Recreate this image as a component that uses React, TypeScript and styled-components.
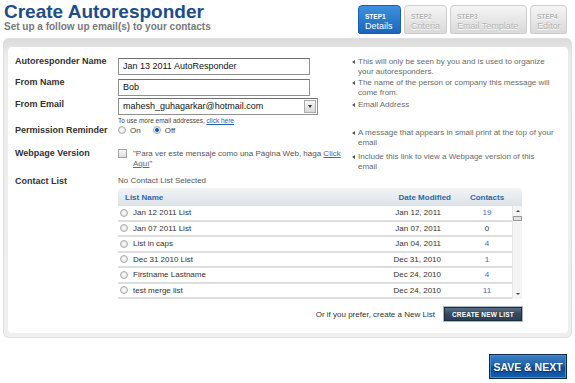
import React from 'react';
import styled, { createGlobalStyle, css } from 'styled-components';

const GlobalStyle = createGlobalStyle`
  body {
    margin: 0;
    background: #fff;
    font-family: "Liberation Sans", Arial, sans-serif;
  }
`;

const Page = styled.div`
  width: 575px;
`;

const Header = styled.div`
  display: flex;
  justify-content: space-between;
  height: 38px;
`;

const TitleBlock = styled.div`
  padding: 2px 0 0 4px;
`;

const Title = styled.h1`
  margin: 0;
  font-size: 19px;
  line-height: 19px;
  font-weight: bold;
  color: #1d4e87;
`;

const Subtitle = styled.div`
  font-size: 10px;
  line-height: 12px;
  font-weight: bold;
  color: #787878;
`;

const Tabs = styled.div`
  display: flex;
  gap: 3px;
  padding: 5px 8px 0 0;
  align-items: flex-start;
`;

const Tab = styled.div<{ $active?: boolean; $w: number }>`
  box-sizing: border-box;
  width: ${(p) => p.$w}px;
  height: 29px;
  padding: 7px 0 0 6px;
  border-radius: 4px 4px 2px 2px;
  white-space: nowrap;
  overflow: hidden;
  ${(p) =>
    p.$active
      ? css`
          background: linear-gradient(#3d91de, #1b66bb);
          border: 1px solid #1a5fae;
          color: #fff;
        `
      : css`
          background: linear-gradient(#f5f5f5, #d9d9d9);
          border: 1px solid #cdcdcd;
          color: #b3b3b3;
          text-shadow: 0 1px 0 #fff;
        `}
`;

const StepNo = styled.div`
  font-size: 6.5px;
  line-height: 8px;
  font-weight: bold;
`;

const StepName = styled.div`
  font-size: 9px;
  line-height: 11px;
`;

const Panel = styled.div`
  margin: 0 3px;
  border-radius: 6px;
  background: linear-gradient(#dadada, #ececec 18px, #efefef);
  padding: 9px 4px 5px 5px;
  box-shadow: inset 0 0 0 1px #e0e0e0;
`;

const Inner = styled.div`
  background: #fff;
  border-radius: 4px;
  padding: 8px 0 12px 7px;
`;

const FieldRow = styled.div<{ $h: number }>`
  display: grid;
  grid-template-columns: 103px 232px 1fr;
  height: ${(p) => p.$h}px;
`;

const Label = styled.div`
  font-size: 9px;
  line-height: 12px;
  font-weight: bold;
  color: #333;
`;

const TextInput = styled.input`
  box-sizing: border-box;
  width: 192px;
  height: 17px;
  margin: 0;
  padding: 0 4px;
  border: 1px solid #8f8f8f;
  border-top-color: #6f6f6f;
  font-family: "Liberation Sans", Arial, sans-serif;
  font-size: 9px;
  color: #111;
  outline: none;
`;

const SelectBox = styled.div`
  box-sizing: border-box;
  display: flex;
  width: 200px;
  height: 17px;
  border: 1px solid #8f8f8f;
  border-top-color: #6f6f6f;
  font-size: 9px;
  color: #111;
`;

const SelectValue = styled.div`
  flex: 1;
  padding: 0 4px;
  line-height: 15px;
`;

const SelectArrow = styled.div`
  width: 10px;
  margin: 1px;
  border: 1px solid #aaa;
  background: linear-gradient(#f6f6f6, #d8d8d8);
  display: flex;
  align-items: center;
  justify-content: center;

  &::after {
    content: '';
    border-left: 2.5px solid transparent;
    border-right: 2.5px solid transparent;
    border-top: 3px solid #333;
  }
`;

const SmallNote = styled.div`
  font-size: 6.5px;
  line-height: 9px;
  color: #444;
  margin-top: 1px;
`;

const Link = styled.a<{ $muted?: boolean }>`
  color: ${(p) => (p.$muted ? '#666' : '#2b63b0')};
  text-decoration: underline;
`;

const RadioGroup = styled.div`
  display: flex;
  align-items: center;
  gap: 4px;
  height: 12px;
  font-size: 8px;
  color: #444;
`;

const Radio = styled.span<{ $checked?: boolean }>`
  box-sizing: border-box;
  display: inline-block;
  width: 8px;
  height: 8px;
  border-radius: 50%;
  border: 1px solid #aaa;
  flex: none;
  background: ${(p) =>
    p.$checked
      ? 'radial-gradient(circle, #1c5fba 0 1.6px, #e9eef5 2.2px)'
      : 'radial-gradient(circle, #fdfdfd, #dcdcdc)'};
`;

const RadioText = styled.span`
  margin-right: 8px;
`;

const CheckRow = styled.div`
  display: flex;
  gap: 6px;
  padding-top: 2px;
`;

const Checkbox = styled.span`
  box-sizing: border-box;
  width: 9px;
  height: 9px;
  flex: none;
  border: 1px solid #a5a5a5;
  background: linear-gradient(#f8f8f8, #dedede);
`;

const CheckText = styled.div`
  font-size: 8px;
  line-height: 10px;
  color: #555;
  white-space: nowrap;
`;

const Muted = styled.div`
  font-size: 8px;
  line-height: 12px;
  color: #555;
`;

const Hint = styled.div<{ $top: number }>`
  display: flex;
  gap: 3px;
  padding-top: ${(p) => p.$top}px;
  padding-left: 2px;
  font-size: 8px;
  line-height: 10px;
  color: #6a6a6a;
  white-space: nowrap;

  &::before {
    content: '';
    flex: none;
    margin-top: 3px;
    width: 0;
    height: 0;
    border-top: 2.5px solid transparent;
    border-bottom: 2.5px solid transparent;
    border-right: 3px solid #555;
  }
`;

const TableBlock = styled.div`
  margin-left: 103px;
  width: 404px;
`;

const TableHead = styled.div`
  display: grid;
  grid-template-columns: 1fr 84px 50px 10px;
  height: 18px;
  align-items: center;
  border-radius: 4px 4px 0 0;
  background: linear-gradient(#f2f4f6, #dde2e7);
  font-size: 8px;
  font-weight: bold;
  color: #2e69a6;
`;

const HeadCell = styled.div<{ $align?: string; $pr?: number }>`
  text-align: ${(p) => p.$align || 'left'};
  padding-left: ${(p) => (p.$align ? 0 : 7)}px;
  padding-right: ${(p) => p.$pr || 0}px;
`;

const TableBody = styled.div`
  display: flex;
  height: 93px;
`;

const Rows = styled.div`
  flex: 1;
`;

const ListRow = styled.div`
  box-sizing: border-box;
  display: grid;
  grid-template-columns: 1fr 84px 50px;
  align-items: center;
  height: 15.5px;
  border-bottom: 2px solid #dedede;
  font-size: 8px;
  color: #333;
`;

const NameCell = styled.div`
  display: flex;
  align-items: center;
  gap: 5px;
  padding-left: 2px;
`;

const DateCell = styled.div`
  text-align: right;
  padding-right: 21px;
`;

const CountCell = styled.div<{ $zero: boolean }>`
  text-align: center;
  color: ${(p) => (p.$zero ? '#333' : '#3873b5')};
`;

const ScrollBar = styled.div`
  width: 10px;
  background: #f4f4f4;
  border-left: 1px solid #e6e6e6;
  display: flex;
  flex-direction: column;
  align-items: center;
  padding: 4px 0 4px;
  box-sizing: border-box;
`;

const Arrow = styled.span<{ $down?: boolean }>`
  width: 0;
  height: 0;
  border-left: 2px solid transparent;
  border-right: 2px solid transparent;
  ${(p) => (p.$down ? 'border-top: 2.5px solid #444;' : 'border-bottom: 2.5px solid #444;')}
  ${(p) => p.$down && 'margin-top: auto;'}
`;

const Thumb = styled.span`
  margin-top: 4px;
  width: 7px;
  height: 3px;
  border: 1px solid #999;
  background: #e2e2e2;
`;

const TableFooter = styled.div`
  display: flex;
  justify-content: flex-end;
  align-items: center;
  gap: 9px;
  margin-top: 8px;
  font-size: 8px;
  color: #333;
`;

const CreateButton = styled.button`
  height: 14px;
  padding: 0 7px;
  border: 1px solid #1d2d3f;
  box-shadow: 0 0 0 1px #a9b8c7;
  background: linear-gradient(#5a6f86, #34495f 50%, #2b3f55);
  color: #fff;
  font-family: "Liberation Sans", Arial, sans-serif;
  font-size: 6.5px;
  font-weight: bold;
  letter-spacing: 0.2px;
  white-space: nowrap;
`;

const Actions = styled.div`
  display: flex;
  justify-content: flex-end;
  padding: 16px 8px 0 0;
`;

const SaveButton = styled.button`
  width: 78px;
  height: 25px;
  padding: 0;
  border: 1px solid #0c2a4f;
  box-shadow: inset 0 0 0 1px #4f8bc9;
  background: linear-gradient(#3b80c6, #1d62ab 45%, #0b4b92 55%, #1460b0);
  color: #fff;
  font-family: "Liberation Sans", Arial, sans-serif;
  font-size: 10.5px;
  font-weight: bold;
  white-space: nowrap;
  text-shadow: 0 1px 1px #0a2c55;
`;

const lists = [
  { name: 'Jan 12 2011 List', date: 'Jan 12, 2011', count: 19 },
  { name: 'Jan 07 2011 List', date: 'Jan 07, 2011', count: 0 },
  { name: 'List in caps', date: 'Jan 04, 2011', count: 4 },
  { name: 'Dec 31 2010 List', date: 'Dec 31, 2010', count: 1 },
  { name: 'Firstname Lastname', date: 'Dec 24, 2010', count: 4 },
  { name: 'test merge list', date: 'Dec 24, 2010', count: 11 },
];

const steps = [
  { no: 'STEP1', name: 'Details', w: 43, active: true },
  { no: 'STEP2', name: 'Criteria', w: 43 },
  { no: 'STEP3', name: 'Email Template', w: 77 },
  { no: 'STEP4', name: 'Editor', w: 37 },
];

export default function App() {
  return (
    <Page>
      <GlobalStyle />
      <Header>
        <TitleBlock>
          <Title>Create Autoresponder</Title>
          <Subtitle>Set up a follow up email(s) to your contacts</Subtitle>
        </TitleBlock>
        <Tabs>
          {steps.map((s) => (
            <Tab key={s.no} $w={s.w} $active={s.active}>
              <StepNo>{s.no}</StepNo>
              <StepName>{s.name}</StepName>
            </Tab>
          ))}
        </Tabs>
      </Header>

      <Panel>
        <Inner>
          <FieldRow $h={21}>
            <Label>Autoresponder Name</Label>
            <div>
              <TextInput readOnly value="Jan 13 2011 AutoResponder" />
            </div>
            <Hint $top={2}>
              <span>
                This will only be seen by you and is used to organize
                <br />
                your autoresponders.
              </span>
            </Hint>
          </FieldRow>

          <FieldRow $h={22}>
            <Label>From Name</Label>
            <div>
              <TextInput readOnly value="Bob" />
            </div>
            <Hint $top={2}>
              <span>
                The name of the person or company this message will
                <br />
                come from.
              </span>
            </Hint>
          </FieldRow>

          <FieldRow $h={26}>
            <Label>From Email</Label>
            <div>
              <SelectBox>
                <SelectValue>mahesh_guhagarkar@hotmail.com</SelectValue>
                <SelectArrow />
              </SelectBox>
              <SmallNote>
                To use more email addresses, <Link>click here</Link>
              </SmallNote>
            </div>
            <Hint $top={2}>
              <span>Email Address</span>
            </Hint>
          </FieldRow>

          <FieldRow $h={23}>
            <Label>Permission Reminder</Label>
            <RadioGroup>
              <Radio />
              <RadioText>On</RadioText>
              <Radio $checked />
              <RadioText>Off</RadioText>
            </RadioGroup>
            <Hint $top={4}>
              <span>
                A message that appears in small print at the top of your
                <br />
                email
              </span>
            </Hint>
          </FieldRow>

          <FieldRow $h={28}>
            <Label>Webpage Version</Label>
            <CheckRow>
              <Checkbox />
              <CheckText>
                "Para ver este mensaje como una Página Web, haga <Link $muted>Click</Link>
                <br />
                <Link $muted>Aquí</Link>"
              </CheckText>
            </CheckRow>
            <Hint $top={5}>
              <span>
                Include this link to view a Webpage version of this
                <br />
                email
              </span>
            </Hint>
          </FieldRow>

          <FieldRow $h={13}>
            <Label>Contact List</Label>
            <Muted>No Contact List Selected</Muted>
          </FieldRow>

          <TableBlock>
            <TableHead>
              <HeadCell>List Name</HeadCell>
              <HeadCell $align="right" $pr={11}>
                Date Modified
              </HeadCell>
              <HeadCell $align="center">Contacts</HeadCell>
              <span />
            </TableHead>
            <TableBody>
              <Rows>
                {lists.map((l) => (
                  <ListRow key={l.name}>
                    <NameCell>
                      <Radio />
                      {l.name}
                    </NameCell>
                    <DateCell>{l.date}</DateCell>
                    <CountCell $zero={l.count === 0}>{l.count}</CountCell>
                  </ListRow>
                ))}
              </Rows>
              <ScrollBar>
                <Arrow />
                <Thumb />
                <Arrow $down />
              </ScrollBar>
            </TableBody>
            <TableFooter>
              Or if you prefer, create a New List
              <CreateButton>CREATE NEW LIST</CreateButton>
            </TableFooter>
          </TableBlock>
        </Inner>
      </Panel>

      <Actions>
        <SaveButton>SAVE &amp; NEXT</SaveButton>
      </Actions>
    </Page>
  );
}
